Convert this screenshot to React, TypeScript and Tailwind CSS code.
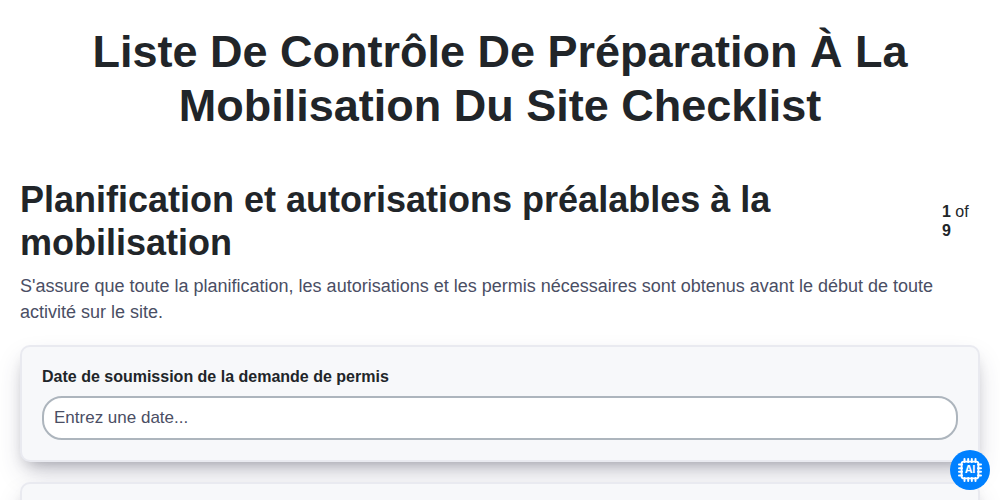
import { useState } from "react";

function AiChipIcon() {
  return (
    <svg width="26" height="26" viewBox="0 0 26 26" fill="none" stroke="white">
      <rect x="4.6" y="4.6" width="16.8" height="16.8" rx="2.2" strokeWidth="1.9" />
      <path
        d="M7.5 2V5M11.2 2V5M14.8 2V5M18.5 2V5M7.5 21v3M11.2 21v3M14.8 21v3M18.5 21v3M2 7.5H5M2 11.2H5M2 14.8H5M2 18.5H5M21 7.5h3M21 11.2h3M21 14.8h3M21 18.5h3"
        strokeWidth="2"
        strokeLinecap="round"
      />
      <text
        x="7.9"
        y="16.4"
        textLength="10.6"
        lengthAdjust="spacing"
        fill="white"
        stroke="none"
        className="font-['Open_Sans',sans-serif] text-[10.5px] font-bold"
      >
        AI
      </text>
    </svg>
  );
}

function Card({ children }: { children?: React.ReactNode }) {
  return (
    <div className="h-[117px] rounded-[10px] border-2 border-[#e9eaf0] bg-[#f7f8fa] px-5 pt-5 shadow-[0_13px_27px_-5px_rgba(50,50,93,0.25),0_8px_16px_-8px_rgba(0,0,0,0.3)]">
      {children}
    </div>
  );
}

export default function App() {
  const [permitDate, setPermitDate] = useState("");

  return (
    <div className="h-[500px] overflow-hidden bg-white px-5 pt-[25px] font-['Liberation_Sans',Arial,sans-serif] text-[#212529]">
      <h1 className="px-10 text-center text-[45px] leading-[54px] font-bold">
        Liste De Contrôle De Préparation À La Mobilisation Du Site Checklist
      </h1>

      <div className="mt-[45px] flex items-center justify-between">
        <h2 className="w-[800px] text-[36px] leading-[43px] font-bold">
          Planification et autorisations préalables à la mobilisation
        </h2>
        <p className="w-[38px] text-base leading-[19px]">
          <b>1</b> of <b>9</b>
        </p>
      </div>

      <p className="mt-[9px] text-[18px] leading-[26px] text-[#4a4e64]">
        S'assure que toute la planification, les autorisations et les permis nécessaires sont obtenus avant le début de toute activité sur le site.
      </p>

      <div className="mt-5 flex flex-col gap-5">
        <Card>
          <label htmlFor="permit-date" className="block text-base leading-5 font-bold">
            Date de soumission de la demande de permis
          </label>
          <input
            id="permit-date"
            value={permitDate}
            onChange={(e) => setPermitDate(e.target.value)}
            placeholder="Entrez une date..."
            className="mt-[9px] block h-11 w-full rounded-[20px] border-2 border-[#adb5bd] bg-white px-2.5 text-[17px] placeholder:text-[#4a4e64] focus:outline-none"
          />
        </Card>
        <Card />
      </div>

      {/* Assistant button */}
      <button
        aria-label="AI"
        className="fixed right-2.5 bottom-2.5 flex size-10 items-center justify-center rounded-full bg-[#0080ff]"
      >
        <AiChipIcon />
      </button>
    </div>
  );
}
